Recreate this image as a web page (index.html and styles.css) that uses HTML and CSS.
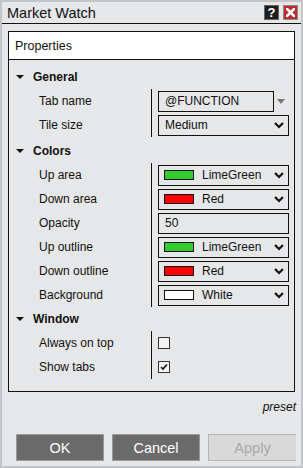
FILE: index.html
```html
<!DOCTYPE html>
<html lang="en">

<head>
    <meta charset="UTF-8">
    <title>Market Watch</title>
    <link rel="stylesheet" href="styles.css">
</head>

<body>
    <div class="window">
        <div class="titlebar">
            <span class="title">Market Watch</span>
            <span class="tb-btn help">?</span>
            <span class="tb-btn close">
                <svg width="9" height="9" viewBox="0 0 9 9"><path d="M1 1 L8 8 M8 1 L1 8" stroke="#fff" stroke-width="2.6" stroke-linecap="square" /></svg>
            </span>
        </div>

        <div class="panel">
            <div class="panel-head">Properties</div>
            <div class="panel-body">
                <!-- General -->
                <div class="row section-head"><span class="caret"></span>General</div>
                <div class="row">
                    <div class="label">Tab name</div>
                    <div class="value">
                        <div class="box text-input">@FUNCTION</div>
                        <span class="drop"></span>
                    </div>
                </div>
                <div class="row">
                    <div class="label">Tile size</div>
                    <div class="value">
                        <div class="box select">Medium<svg class="chev" width="10" height="7" viewBox="0 0 10 7"><polyline points="1,1 5,5 9,1" fill="none" stroke="#111" stroke-width="2.2" /></svg></div>
                    </div>
                </div>

                <!-- Colors -->
                <div class="row section-head gap"><span class="caret"></span>Colors</div>
                <div class="row">
                    <div class="label">Up area</div>
                    <div class="value">
                        <div class="box select"><span class="swatch lime"></span>LimeGreen<svg class="chev" width="10" height="7" viewBox="0 0 10 7"><polyline points="1,1 5,5 9,1" fill="none" stroke="#111" stroke-width="2.2" /></svg></div>
                    </div>
                </div>
                <div class="row">
                    <div class="label">Down area</div>
                    <div class="value">
                        <div class="box select"><span class="swatch red"></span>Red<svg class="chev" width="10" height="7" viewBox="0 0 10 7"><polyline points="1,1 5,5 9,1" fill="none" stroke="#111" stroke-width="2.2" /></svg></div>
                    </div>
                </div>
                <div class="row">
                    <div class="label">Opacity</div>
                    <div class="value">
                        <div class="box select">50</div>
                    </div>
                </div>
                <div class="row">
                    <div class="label">Up outline</div>
                    <div class="value">
                        <div class="box select"><span class="swatch lime"></span>LimeGreen<svg class="chev" width="10" height="7" viewBox="0 0 10 7"><polyline points="1,1 5,5 9,1" fill="none" stroke="#111" stroke-width="2.2" /></svg></div>
                    </div>
                </div>
                <div class="row">
                    <div class="label">Down outline</div>
                    <div class="value">
                        <div class="box select"><span class="swatch red"></span>Red<svg class="chev" width="10" height="7" viewBox="0 0 10 7"><polyline points="1,1 5,5 9,1" fill="none" stroke="#111" stroke-width="2.2" /></svg></div>
                    </div>
                </div>
                <div class="row">
                    <div class="label">Background</div>
                    <div class="value">
                        <div class="box select"><span class="swatch white"></span>White<svg class="chev" width="10" height="7" viewBox="0 0 10 7"><polyline points="1,1 5,5 9,1" fill="none" stroke="#111" stroke-width="2.2" /></svg></div>
                    </div>
                </div>

                <!-- Window -->
                <div class="row section-head"><span class="caret"></span>Window</div>
                <div class="row">
                    <div class="label">Always on top</div>
                    <div class="value"><span class="check"></span></div>
                </div>
                <div class="row">
                    <div class="label">Show tabs</div>
                    <div class="value">
                        <span class="check"><svg width="10" height="10" viewBox="0 0 10 10"><polyline points="2,5 4,7 8,2.5" fill="none" stroke="#111" stroke-width="1.6" /></svg></span>
                    </div>
                </div>
            </div>
        </div>

        <div class="preset">preset</div>

        <div class="buttons">
            <button class="btn">OK</button>
            <button class="btn">Cancel</button>
            <button class="btn disabled">Apply</button>
        </div>
    </div>
</body>

</html>
```

FILE: styles.css
```css
body {
    margin: 0;
    font-family: "Liberation Sans", Arial, sans-serif;
    color: #111;
}

.window {
    width: 303px;
    height: 468px;
    box-sizing: border-box;
    border: 2px solid #c4c5c6;
    background-color: #e6e7e8;
    /* dialog grey */
    display: flex;
    flex-direction: column;
}

.titlebar {
    height: 21px;
    border-bottom: 1px solid #111;
    display: flex;
    align-items: center;
    padding: 0 3px 0 5px;
}

.title {
    flex: 1;
    font-size: 14.5px;
}

.tb-btn {
    width: 15px;
    height: 15px;
    box-sizing: border-box;
    margin-left: 4px;
    display: flex;
    align-items: center;
    justify-content: center;
}

.help {
    background-color: #1e1e1e;
    border: 1px solid #666;
    color: #fff;
    font-weight: bold;
    font-size: 13px;
}

.close {
    background-color: #be2a30;
    border: 1px solid #8a8a8a;
}

.panel {
    margin: 7px 6px 0;
    border: 1px solid #111;
}

.panel-head {
    height: 27px;
    background-color: #fff;
    border-bottom: 1px solid #111;
    padding-left: 6px;
    display: flex;
    align-items: center;
    font-size: 12.5px;
}

.panel-body {
    padding: 5px 5px 12px 0;
}

.row {
    height: 24px;
    display: flex;
    align-items: center;
    font-size: 12px;
}

.section-head {
    padding-left: 7px;
    font-weight: bold;
}

.section-head.gap {
    margin-top: 2px;
}

.caret {
    width: 0;
    height: 0;
    border-left: 4px solid transparent;
    border-right: 4px solid transparent;
    border-top: 4px solid #111;
    margin-right: 9px;
}

.label {
    width: 112px;
    padding-left: 30px;
    flex-shrink: 0;
}

.value {
    flex: 1;
    align-self: stretch;
    border-left: 1px solid #111;
    padding-left: 6px;
    display: flex;
    align-items: center;
}

.box {
    height: 21px;
    box-sizing: border-box;
    border: 1px solid #111;
    padding: 0 4px 0 6px;
    display: flex;
    align-items: center;
}

.select {
    flex: 1;
}

.text-input {
    width: 116px;
}

.drop {
    width: 0;
    height: 0;
    margin-left: 3px;
    border-left: 4px solid transparent;
    border-right: 4px solid transparent;
    border-top: 5px solid #777;
}

.chev {
    margin-left: auto;
}

.swatch {
    width: 30px;
    height: 10px;
    box-sizing: border-box;
    border: 1px solid #111;
    margin-left: -1px;
    margin-right: 8px;
}

.swatch.lime {
    background-color: #32cd32;
}

.swatch.red {
    background-color: #ff0000;
}

.swatch.white {
    background-color: #fff;
}

.check {
    width: 12px;
    height: 12px;
    box-sizing: border-box;
    border: 1px solid #333;
    background-color: #f2f2f2;
    display: flex;
    align-items: center;
    justify-content: center;
}

.preset {
    margin-top: 8px;
    padding-right: 5px;
    line-height: 14px;
    text-align: right;
    font-style: italic;
    font-size: 12px;
}

.buttons {
    display: flex;
    gap: 8px;
    padding-left: 14px;
    margin-top: 20px;
}

.btn {
    width: 88px;
    height: 27px;
    box-sizing: border-box;
    border: 1px solid #9a9a9a;
    background-color: #6b6b6b;
    color: #fff;
    font-family: inherit;
    font-size: 14.5px;
    padding: 0;
}

.btn.disabled {
    background-color: #d9d9d9;
    border-color: #b6b6b6;
    border-right: none;
    color: #a9a9a9;
}
```
